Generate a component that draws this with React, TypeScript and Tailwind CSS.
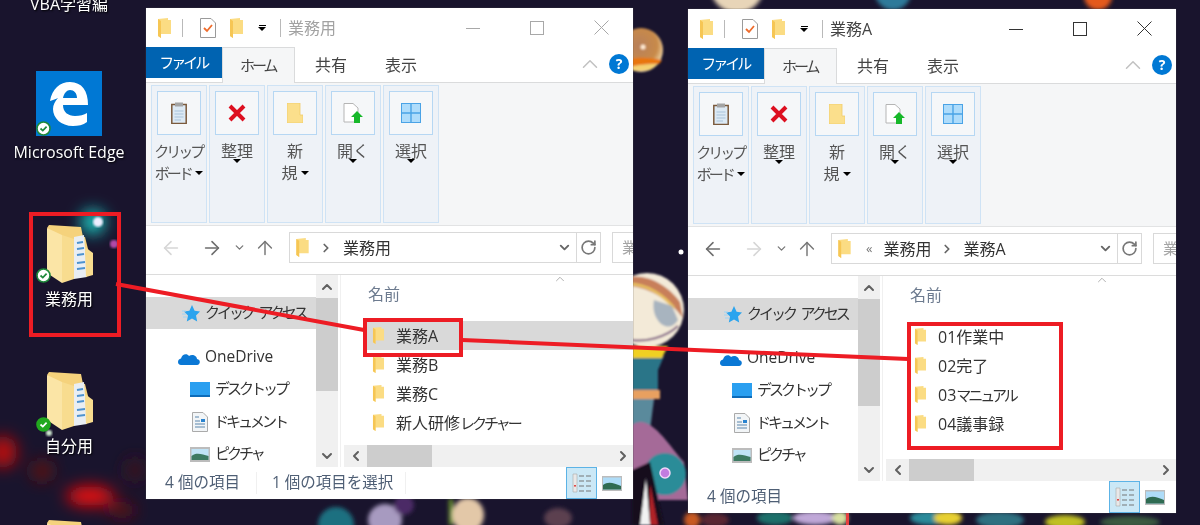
import { ArrowLeft, ArrowRight, ArrowUp, ChevronDown, ChevronLeft, ChevronRight, ChevronUp, RotateCw } from 'lucide-react';

type RibbonGroup = { lines: string[]; icon: 'clip' | 'x' | 'folder' | 'open' | 'select' };

const ribbonGroups: RibbonGroup[] = [
  { lines: ['クリップ', 'ボード'], icon: 'clip' },
  { lines: ['整理'], icon: 'x' },
  { lines: ['新', '規'], icon: 'folder' },
  { lines: ['開く'], icon: 'open' },
  { lines: ['選択'], icon: 'select' },
];

// the screenshot's UI font has narrow katakana, so runs of it get squeezed
function Label({ text }: { text: string }) {
  return (
    <>
      {text.split(/([\u30A0-\u30FF]+)/).map((part, index) =>
        index % 2 === 1 ? (
          <span key={index} className="text-[15px] tracking-[-3px]">
            {part}
            <span className="tracking-normal">{'\u200a'}</span>
          </span>
        ) : (
          part
        ),
      )}
    </>
  );
}

function SmallFolder({ className = 'w-[13px] h-[20px]' }: { className?: string }) {
  return (
    <svg className={`shrink-0 ${className}`} viewBox="0 0 13 20">
      <path d="M0 1 L10 0 L10 2 L13 2 L13 16 L3 16 L3 20 L0 18 Z" fill="#fbdc83" />
      <path d="M3 16 L3 3 L0 1 L0 18 L3 20 Z" fill="#f6c654" />
    </svg>
  );
}

function DesktopFolder() {
  return (
    <svg className="h-[58px] w-[46px]" viewBox="0 0 46 58">
      <path d="M0 3 L2 0 L34 2 L36 12 L38 12 L44 36 L44 50 L28 52 L12 56 L12 14 Z" fill="#f5d27c" />
      <path d="M0 3 L15 10 L15 58 L0 48 Z" fill="#fbe5a6" />
      <path d="M15 10 L27 14 L27 54 L15 58 Z" fill="#f8dc8f" />
      <path d="M27 12 L37 10 L40 52 L27 54 Z" fill="#e9eef3" />
      <path d="M30 18 L36 17 M30 24 L37 23 M30 30 L37 29 M30 38 L38 37 M30 44 L38 43" stroke="#4d93cf" strokeWidth="2" />
      <path d="M38 22 L46 28 L46 50 L39 52 Z" fill="#f8dc8f" />
    </svg>
  );
}

function SyncBadge({ solid = false }: { solid?: boolean }) {
  return (
    <svg className="absolute h-[15px] w-[15px]" viewBox="0 0 15 15" style={{ left: 0, bottom: 0 }}>
      <circle cx="7.5" cy="7.5" r="6.5" fill={solid ? '#22a81f' : '#fff'} stroke={solid ? '#22a81f' : '#1f8a3b'} strokeWidth="1.6" />
      <path d="M4.5 7.5 L6.8 9.6 L10.6 5.6" fill="none" stroke={solid ? '#fff' : '#1f8a3b'} strokeWidth="1.7" />
    </svg>
  );
}

function RibbonIcon({ icon }: { icon: RibbonGroup['icon'] }) {
  if (icon === 'clip') {
    return (
      <svg className="h-[22px] w-[16px]" viewBox="0 0 16 22">
        <rect x="0.8" y="2.5" width="14.4" height="19" fill="#dce9f4" stroke="#7b5a3c" strokeWidth="1.5" />
        <rect x="4" y="0.5" width="8" height="4" fill="#a3a3a3" />
        <path d="M3.5 9 H12.5 M3.5 12 H12.5 M3.5 15 H12.5 M3.5 18 H10" stroke="#a9c3da" />
      </svg>
    );
  }
  if (icon === 'x') {
    return (
      <svg className="h-[18px] w-[18px]" viewBox="0 0 18 18">
        <path d="M2 2 L16 16 M16 2 L2 16" stroke="#dd0f20" strokeWidth="4" />
      </svg>
    );
  }
  if (icon === 'folder') {
    return (
      <svg className="h-[20px] w-[16px]" viewBox="0 0 16 20">
        <path d="M0 0 H13 V12 H16 V20 H0 Z" fill="#fbdf8c" stroke="#f1cb6b" strokeWidth="0.8" />
      </svg>
    );
  }
  if (icon === 'open') {
    return (
      <svg className="h-[20px] w-[20px]" viewBox="0 0 20 20">
        <path d="M1 0.5 H10 L15 5 V19 H1 Z" fill="#fff" stroke="#b5b5b5" />
        <path d="M14 8 L20 14 H17 V20 H11 V14 H8 Z" fill="#17b82a" />
      </svg>
    );
  }
  return (
    <svg className="h-[20px] w-[20px]" viewBox="0 0 20 20">
      <rect x="0.5" y="0.5" width="19" height="19" fill="#aedcfb" stroke="#4aa3e6" />
      <path d="M10 0 V20 M0 10 H20" stroke="#4aa3e6" strokeWidth="1.4" />
    </svg>
  );
}

function Caret() {
  return <span className="inline-block h-0 w-0 border-x-[4px] border-t-[4px] border-x-transparent border-t-black" />;
}

function QuickAccessBar({ title, active }: { title: string; active: boolean }) {
  return (
    <div className="flex h-[39px] shrink-0 items-center">
      <SmallFolder className="ml-[12px] h-[20px] w-[13px]" />
      <span className="ml-[11px] h-[18px] w-px bg-[#b9b9b9]" />
      <svg className="ml-[17px] h-[20px] w-[16px]" viewBox="0 0 16 20">
        <path d="M0.5 0.5 H11 L15.5 5 V19.5 H0.5 Z" fill="#fff" stroke="#9a9a9a" />
        <path d="M4 10 L7 13 L12 7" fill="none" stroke="#ee6b2b" strokeWidth="1.8" />
      </svg>
      <SmallFolder className="ml-[14px] h-[20px] w-[13px]" />
      <span className="ml-[15px] flex flex-col items-center gap-[1px]">
        <span className="h-px w-[7px] bg-black" />
        <Caret />
      </span>
      <span className="ml-[14px] h-[18px] w-px bg-[#b9b9b9]" />
      <span className={`ml-[7px] text-[16px] ${active ? 'text-[#444]' : 'text-[#a2a2a2]'}`}>{title}</span>
      <div className={`ml-auto flex ${active ? 'text-[#333]' : 'text-[#a8a8a8]'}`}>
        <span className="flex h-[39px] w-[64px] items-center justify-center">
          <span className="mt-[1px] h-px w-[14px] bg-current" />
        </span>
        <span className="flex h-[39px] w-[64px] items-center justify-center">
          <span className="h-[14px] w-[14px] border border-current" />
        </span>
        <span className="flex h-[39px] w-[64px] items-center justify-center">
          <svg className="h-[15px] w-[15px]" viewBox="0 0 15 15">
            <path d="M0.5 0.5 L14.5 14.5 M14.5 0.5 L0.5 14.5" stroke="currentColor" />
          </svg>
        </span>
      </div>
    </div>
  );
}

function TabRow() {
  return (
    <div className="relative flex h-[36px] shrink-0 items-start border-b border-[#dadbdc] text-[16px] text-[#444]">
      <div className="flex h-[31px] w-[76px] items-center justify-center bg-[#0063b1] text-white">
        <Label text="ファイル" />
      </div>
      <div className="flex h-[36px] w-[73px] items-center justify-center border-x border-t border-[#dadbdc] bg-[#f5f6f7]">
        <Label text="ホーム" />
      </div>
      <div className="ml-[20px] flex h-[36px] w-[32px] items-center whitespace-nowrap">共有</div>
      <div className="ml-[38px] flex h-[36px] w-[32px] items-center whitespace-nowrap">表示</div>
      <ChevronUp className="absolute right-[30px] top-[4px] h-[26px] w-[26px] text-[#c2c2c2]" strokeWidth={1.4} />
      <div className="absolute right-[4px] top-[7px] flex h-[20px] w-[20px] items-center justify-center rounded-full bg-[#0078d4] text-[14px] font-bold leading-none text-white">?</div>
    </div>
  );
}

function Ribbon() {
  return (
    <div className="flex h-[143px] shrink-0 gap-[2px] border-b border-[#e2e3e4] bg-[#f5f6f7] px-[5px] py-[2px]">
      {ribbonGroups.map((group) => (
        <div
          key={group.icon}
          className="flex w-[56px] flex-col items-center border border-[#cfe3f5] bg-[#eef2f7] pt-[5px] text-[16px] leading-[22px] text-[#555]"
        >
          <div className="flex h-[44px] w-[44px] shrink-0 items-center justify-center border border-[#b6d7f3] bg-[#f5f7f9]">
            <RibbonIcon icon={group.icon} />
          </div>
          <div className="mt-[5px] whitespace-nowrap">
            <Label text={group.lines[0]} />
            {group.lines.length === 1 && <div className="-mt-[3px] flex justify-center leading-[8px]"><Caret /></div>}
          </div>
          {group.lines.length > 1 && (
            <div className="flex items-center gap-[3px] whitespace-nowrap">
              <span><Label text={group.lines[1]} /></span>
              <Caret />
            </div>
          )}
        </div>
      ))}
    </div>
  );
}

function AddressRow({ backActive, path }: { backActive: boolean; path: string[] }) {
  const nested = path.length > 1;
  return (
    <div className="flex h-[49px] shrink-0 items-start border-b border-[#dcdcdc] pt-[6px]">
      <div className="flex h-[31px] w-[143px] shrink-0 items-center pl-[14px] text-[#7d7d7d]">
        <ArrowLeft className={`h-[22px] w-[22px] ${backActive ? 'text-[#6d6d6d]' : 'text-[#d6d6d6]'}`} strokeWidth={1.7} />
        <ArrowRight className={`ml-[19px] h-[22px] w-[22px] ${backActive ? 'text-[#d6d6d6]' : 'text-[#6d6d6d]'}`} strokeWidth={1.7} />
        <ChevronDown className="ml-[10px] h-[13px] w-[13px] text-[#777]" strokeWidth={2.4} />
        <ArrowUp className="ml-[8px] h-[22px] w-[22px] text-[#777]" strokeWidth={1.6} />
      </div>
      <div className={`flex h-[31px] shrink-0 items-center border border-[#d9d9d9] text-[16px] text-[#333] ${nested ? 'w-[311px]' : 'w-[312px]'}`}>
        <SmallFolder className="ml-[6px] h-[19px] w-[13px]" />
        {nested && <span className="ml-[15px] text-[13px] leading-none text-[#777]">«</span>}
        {path.map((part, index) => (
          <span key={part} className="flex items-center">
            {(index > 0 || !nested) && <ChevronRight className={`h-[14px] w-[14px] text-[#666] ${index > 0 ? 'mx-[9px]' : 'mx-[10px]'}`} strokeWidth={3} />}
            <span className={index === 0 && nested ? 'ml-[11px]' : ''}>{part}</span>
          </span>
        ))}
        <ChevronDown className="ml-auto mr-[4px] h-[15px] w-[15px] text-[#666]" strokeWidth={3} />
        <div className="flex h-full w-[24px] items-center justify-center border-l border-[#d9d9d9]">
          <RotateCw className="h-[17px] w-[17px] text-[#777]" strokeWidth={2.4} />
        </div>
      </div>
      <div className="ml-[11px] flex h-[31px] flex-1 items-center overflow-hidden border-y border-l border-[#d9d9d9] pl-[9px] text-[15px] text-[#a5a5a5]">
        業
      </div>
    </div>
  );
}

function NavPane({ thumbHeight }: { thumbHeight: string }) {
  return (
    <div className="flex w-[195px] shrink-0 border-r border-[#f0f0f0]">
      <div className="h-full w-[170px] overflow-hidden pt-[22px] text-[15.5px] text-[#333]">
        <div className="flex h-[32px] items-center bg-[#d9d9d9] pl-[36px]">
          <svg className="h-[17px] w-[18px] shrink-0" viewBox="0 0 18 17">
            <path d="M10 0 L12.6 5.7 L18 6.4 L14 10.4 L15.2 16.5 L10 13.4 L4.8 16.5 L6 10.4 L2 6.4 L7.4 5.7 Z" fill="#2ba4ee" />
            <path d="M0 6 H4 M0 9 H4 M1 12 H5" stroke="#9fd4f5" />
          </svg>
          <span className="ml-[5px] whitespace-nowrap"><Label text="クイック アクセス" /></span>
        </div>
        <div className="mt-[12px] flex h-[32px] items-center pl-[32px]">
          <svg className="h-[15px] w-[22px] shrink-0" viewBox="0 0 22 15">
            <path d="M3 15 C-1 15 -1 9 3 8.5 C4 4 9 3 11 6 C14 3.5 19 5.5 19 9 C23 9.5 22.5 15 19 15 Z" fill="#0a78d5" />
          </svg>
          <span className="ml-[5px]">OneDrive</span>
        </div>
        <div className="flex h-[32px] items-center pl-[44px]">
          <svg className="h-[15px] w-[20px] shrink-0" viewBox="0 0 20 15">
            <rect width="20" height="15" fill="#2a9ff0" />
            <rect y="13" width="20" height="2" fill="#0d6bb8" />
          </svg>
          <span className="ml-[5px] whitespace-nowrap"><Label text="デスクトップ" /></span>
        </div>
        <div className="flex h-[33px] items-center pl-[46px]">
          <svg className="h-[20px] w-[16px] shrink-0" viewBox="0 0 16 20">
            <path d="M0.5 0.5 H11 L15.5 5 V19.5 H0.5 Z" fill="#f2f5f7" stroke="#aaa" />
            <path d="M3 5 H7 M3 9 H8 M3 12 H13 M3 15 H13" stroke="#5a86ad" />
            <rect x="9" y="7" width="4" height="3" fill="#2a84d0" />
          </svg>
          <span className="ml-[6px] whitespace-nowrap"><Label text="ドキュメント" /></span>
        </div>
        <div className="flex h-[32px] items-center pl-[44px]">
          <svg className="h-[15px] w-[20px] shrink-0" viewBox="0 0 20 15">
            <rect width="20" height="15" fill="#bcbcbc" />
            <rect x="1.5" y="2" width="17" height="11" fill="#bfe3f6" />
            <path d="M1.5 9 C6 5 12 7 18.5 9 V13 H1.5 Z" fill="#3c7a62" />
          </svg>
          <span className="ml-[5px] whitespace-nowrap"><Label text="ピクチャ" /></span>
        </div>
      </div>
      <div className="flex w-[22px] flex-col items-center bg-[#f0f0f0]">
        <div className="flex h-[23px] items-center">
          <ChevronUp className="h-[16px] w-[16px] text-[#606060]" strokeWidth={3} />
        </div>
        <div className={`w-full bg-[#cdcdcd] ${thumbHeight}`} />
        <div className="mt-auto flex h-[22px] items-center">
          <ChevronDown className="h-[16px] w-[16px] text-[#606060]" strokeWidth={3} />
        </div>
      </div>
    </div>
  );
}

function FileList({ items, selected }: { items: string[]; selected?: string }) {
  return (
    <div className="relative flex min-w-0 flex-1 flex-col">
      <ChevronUp className="absolute left-[208px] -top-[3px] h-[14px] w-[22px] text-[#a5a5a5]" strokeWidth={1.5} />
      <div className="flex-1 pl-[24px] pt-[9px]">
        <div className="h-[37px] pl-[3px] text-[16px] leading-[20px] text-[#6d7b8f]">名前</div>
        {items.map((item) => (
          <div
            key={item}
            className={`flex h-[29px] items-center pl-[7px] text-[16px] text-[#333] ${item === selected ? 'bg-[#d9d9d9]' : ''}`}
          >
            <SmallFolder className="h-[17px] w-[13px]" />
            <span className="ml-[11px] mt-[1px] whitespace-nowrap"><Label text={item} /></span>
          </div>
        ))}
      </div>
      <div className="ml-[3px] flex h-[22px] shrink-0 items-center bg-[#f0f0f0]">
        <div className="flex w-[23px] justify-center">
          <ChevronLeft className="h-[16px] w-[16px] text-[#606060]" strokeWidth={3} />
        </div>
        <div className="h-full w-[65px] bg-[#cdcdcd]" />
        <ChevronRight className="ml-auto mr-[2px] h-[16px] w-[16px] text-[#606060]" strokeWidth={3} />
      </div>
    </div>
  );
}

function StatusBar({ count, selection }: { count: string; selection?: string }) {
  return (
    <div className="flex flex-1 items-center pl-[19px] text-[15.5px] text-[#4f5f75]">
      <span>{count}</span>
      {selection && (
        <>
          <span className="ml-[16px] h-[22px] w-px bg-[#f0f0f0]" />
          <span className="ml-[15px]">{selection}</span>
          <span className="ml-[12px] h-[22px] w-px bg-[#f0f0f0]" />
        </>
      )}
      <div className="ml-auto mr-[11px] flex items-center self-stretch">
        <div className="flex h-full w-[31px] items-center justify-center border border-[#5cb3e6] bg-[#cbe8f6]">
          <svg className="h-[20px] w-[20px]" viewBox="0 0 20 20">
            <path d="M1 1 H5 V19 H1 Z" fill="#e8e8e8" stroke="#aaa" strokeWidth="0.6" />
            <path d="M7 3 H12 M14 3 H19 M7 8 H12 M14 8 H19 M7 13 H12 M14 13 H19 M7 18 H12 M14 18 H19" stroke="#777" strokeWidth="1.2" />
            <rect x="2.2" y="12" width="1.6" height="1.6" fill="#d22" />
          </svg>
        </div>
        <svg className="ml-[5px] h-[15px] w-[20px]" viewBox="0 0 20 15">
          <rect width="20" height="15" fill="#bcbcbc" />
          <rect x="1" y="1.5" width="18" height="12" fill="#aedcf8" />
          <path d="M1 9 C6 5 12 7 19 10 V13.5 H1 Z" fill="#2f6b52" />
        </svg>
      </div>
    </div>
  );
}

function ExplorerWindow({
  className,
  title,
  active,
  path,
  items,
  selected,
  thumbHeight,
  selection,
}: {
  className: string;
  title: string;
  active: boolean;
  path: string[];
  items: string[];
  selected?: string;
  thumbHeight: string;
  selection?: string;
}) {
  return (
    <section className={`absolute flex flex-col overflow-hidden bg-white ${className}`}>
      <QuickAccessBar title={title} active={active} />
      <TabRow />
      <Ribbon />
      <AddressRow backActive={active} path={path} />
      <div className="flex min-h-0 flex-1">
        <NavPane thumbHeight={thumbHeight} />
        <FileList items={items} selected={selected} />
      </div>
      <div className="flex h-[32px] shrink-0">
        <StatusBar count="4 個の項目" selection={selection} />
      </div>
    </section>
  );
}

function Wallpaper() {
  return (
    <svg className="absolute inset-0 h-[525px] w-[1200px]" viewBox="0 0 1200 525">
      <defs>
        <filter id="b1"><feGaussianBlur stdDeviation="1" /></filter>
        <filter id="b2"><feGaussianBlur stdDeviation="2" /></filter>
        <filter id="b8" x="-100%" y="-100%" width="300%" height="300%"><feGaussianBlur stdDeviation="8" /></filter>
        <radialGradient id="amber" cx="45%" cy="40%" r="60%">
          <stop offset="0%" stopColor="#b8805a" />
          <stop offset="70%" stopColor="#c88a4a" />
          <stop offset="100%" stopColor="#f0d8a8" />
        </radialGradient>
      </defs>
      {/* left side glows */}
      <g filter="url(#b8)">
        <circle cx="93" cy="222" r="12" fill="#1fd0c8" />
        <ellipse cx="3" cy="452" rx="14" ry="16" fill="#b81010" />
        <ellipse cx="42" cy="471" rx="11" ry="11" fill="#5a1418" />
        <ellipse cx="90" cy="496" rx="24" ry="10" fill="#f00808" />
        <ellipse cx="122" cy="510" rx="14" ry="8" fill="#5a1018" />
        <ellipse cx="135" cy="470" rx="10" ry="12" fill="#3a1320" />
      </g>
      <circle cx="98" cy="222" r="5" fill="#eef" filter="url(#b1)" />
      <circle cx="114" cy="244" r="4" fill="#b14aa8" filter="url(#b1)" />
      <circle cx="49" cy="433" r="3" fill="#cfe8d0" filter="url(#b1)" />
      {/* top edge */}
      <circle cx="737" cy="-14" r="27" fill="#e8d5b8" filter="url(#b2)" />
      <circle cx="893" cy="-8" r="18" fill="#2e7a9a" filter="url(#b2)" />
      <circle cx="1098" cy="-4" r="14" fill="#e45a1c" filter="url(#b2)" />
      {/* orange marble */}
      <g filter="url(#b1)">
        <circle cx="641" cy="50" r="22" fill="url(#amber)" />
        <path d="M625 60 C640 56 652 58 662 60 L659 64 C648 63 636 66 628 69 Z" fill="#e8760f" />
        <path d="M630 67 C640 64 650 64 658 64 L650 70 L634 71 Z" fill="#f4d070" />
        <circle cx="643" cy="47" r="2.5" fill="#ffe8d0" />
      </g>
      {/* stem between the windows */}
      <g filter="url(#b1)">
        <path d="M632 356 H664 L658 370 V392 H632 Z" fill="#2a7488" />
        <rect x="632" y="390" width="28" height="9" fill="#e8a060" />
        <path d="M632 399 H654 L650 430 H632 Z" fill="#5a8a9c" />
        <path d="M632 425 C650 412 668 445 684 462 L688 500 H632 Z" fill="#a56a98" />
        <circle cx="665" cy="474" r="21" fill="#2a8c98" />
        <path d="M632 346 H668 L662 358 H632 Z" fill="#f0d020" />
        <circle cx="647" cy="310" r="37" fill="#f3ead8" />
        <path d="M625 278 C645 272 668 285 680 302 L683 318 C670 300 650 288 630 286 Z" fill="#c87f5a" />
        <path d="M628 284 C648 284 664 296 674 308" fill="none" stroke="#e8c060" strokeWidth="3" />
        <path d="M654 300 C650 320 668 336 678 320 L672 306 Z" fill="#a8b4bf" />
        <path d="M632 340 C645 342 665 338 678 326" fill="none" stroke="#7b5a80" strokeWidth="2" />
        <path d="M632 470 L650 462 L664 525 H632 Z" fill="#16101e" />
        <path d="M640 525 L646 478 L650 525 Z" fill="#f2f2f2" />
        <path d="M650 525 L650 484 L658 525 Z" fill="#b02028" />
      </g>
      <circle cx="665" cy="473" r="5" fill="#c27ce0" stroke="#f0d8f8" strokeWidth="1.5" />
      <circle cx="681" cy="252" r="2.5" fill="#fff" />
      {/* bottom strip */}
      <g filter="url(#b2)">
        <circle cx="336" cy="525" r="18" fill="#1d6f80" />
        <ellipse cx="385" cy="520" rx="17" ry="16" fill="#a79ac0" />
        <rect x="449" y="499" width="4" height="26" fill="#6d9a2a" />
        <ellipse cx="468" cy="515" rx="16" ry="17" fill="#e3c8a8" />
        <circle cx="404" cy="505" r="10" fill="#4c2a66" />
        <ellipse cx="558" cy="518" rx="14" ry="10" fill="#5b4050" />
        <circle cx="692" cy="520" r="8" fill="#c85a20" />
        <ellipse cx="715" cy="520" rx="14" ry="7" fill="#5a2830" />
        <ellipse cx="775" cy="518" rx="18" ry="7" fill="#1f6f6a" />
        <ellipse cx="815" cy="518" rx="22" ry="7" fill="#c0a8d8" />
        <ellipse cx="840" cy="518" rx="8" ry="7" fill="#d8e0a0" />
        <ellipse cx="930" cy="518" rx="20" ry="7" fill="#2a8a9a" />
        <ellipse cx="948" cy="518" rx="14" ry="7" fill="#e8d030" />
        <ellipse cx="1000" cy="520" rx="24" ry="8" fill="#2d7080" />
        <ellipse cx="1065" cy="522" rx="20" ry="7" fill="#c0c020" />
        <ellipse cx="1130" cy="522" rx="30" ry="6" fill="#3a5a40" />
      </g>
      <rect x="846" y="513" width="3" height="12" fill="#e64040" />
    </svg>
  );
}

function DesktopIcons() {
  const label = 'absolute whitespace-nowrap text-[16px] leading-[20px] text-white [text-shadow:1px_1px_2px_#000] -translate-x-1/2';
  return (
    <>
      <div className={`${label} left-[69px] -top-[6px]`}>VBA学習編</div>

      <div className="absolute left-[36px] top-[71px] flex h-[65px] w-[66px] items-center justify-center bg-[#0078d4]">
        <svg className="h-[46px] w-[40px]" viewBox="0 0 40 46">
          <path
            d="M1 20 C3 8 11 1 21 1 C33 1 39 10 39 24 H14 C14 31 19 35 26 35 C31 35 35 34 38 32 V41 C34 44 29 45 24 45 C12 45 4 37 4 28 C4 24 6 20 9 17 C7 18 4 19 1 20 Z M14 17 H28 C28 12 25 9 21 9 C18 9 15 12 14 17 Z"
            fill="#fff"
            fillRule="evenodd"
          />
        </svg>
        <SyncBadge />
      </div>
      <div className={`${label} left-[69px] top-[142px]`}>Microsoft Edge</div>

      <div className="absolute left-[36px] top-[225px] h-[58px] w-[54px]">
        <div className="absolute left-[11px] top-0"><DesktopFolder /></div>
        <SyncBadge />
      </div>
      <div className={`${label} left-[69px] top-[289px]`}>業務用</div>

      <div className="absolute left-[36px] top-[372px] h-[60px] w-[54px]">
        <div className="absolute left-[11px] top-0"><DesktopFolder /></div>
        <SyncBadge solid />
      </div>
      <div className={`${label} left-[69px] top-[436px]`}>自分用</div>

      <div className="absolute left-[47px] top-[520px]"><DesktopFolder /></div>
    </>
  );
}

function Annotations() {
  return (
    <>
      <div className="absolute left-[29px] top-[212px] h-[125px] w-[92px] border-[4px] border-[#ed1c24]" />
      <div className="absolute left-[363px] top-[318px] h-[39px] w-[100px] border-[4px] border-[#ed1c24]" />
      <div className="absolute left-[907px] top-[322px] h-[128px] w-[156px] border-[4px] border-[#ed1c24]" />
      <svg className="absolute inset-0 h-[525px] w-[1200px]" viewBox="0 0 1200 525">
        <path d="M116 284 L364 330" stroke="#ed1c24" strokeWidth="4" />
        <path d="M462 340 L908 359" stroke="#ed1c24" strokeWidth="4" />
      </svg>
    </>
  );
}

export default function App() {
  return (
    <div className="relative h-[525px] w-[1200px] overflow-hidden bg-[#19142d] font-['Open_Sans','Noto_Sans_CJK_JP',sans-serif] blur-[0.3px]">
      <Wallpaper />
      <DesktopIcons />
      <ExplorerWindow
        className="left-[146px] top-[8px] h-[491px] w-[487px] shadow-[0_0_1px_#555]"
        title="業務用"
        active={false}
        path={['業務用']}
        items={['業務A', '業務B', '業務C', '新人研修レクチャー']}
        selected="業務A"
        thumbHeight="h-[93px]"
        selection="1 個の項目を選択"
      />
      <ExplorerWindow
        className="left-[688px] top-[9px] h-[504px] w-[488px] shadow-[0_0_1px_#555]"
        title="業務A"
        active
        path={['業務用', '業務A']}
        items={['01作業中', '02完了', '03マニュアル', '04議事録']}
        thumbHeight="h-[107px]"
      />
      <Annotations />
    </div>
  );
}
